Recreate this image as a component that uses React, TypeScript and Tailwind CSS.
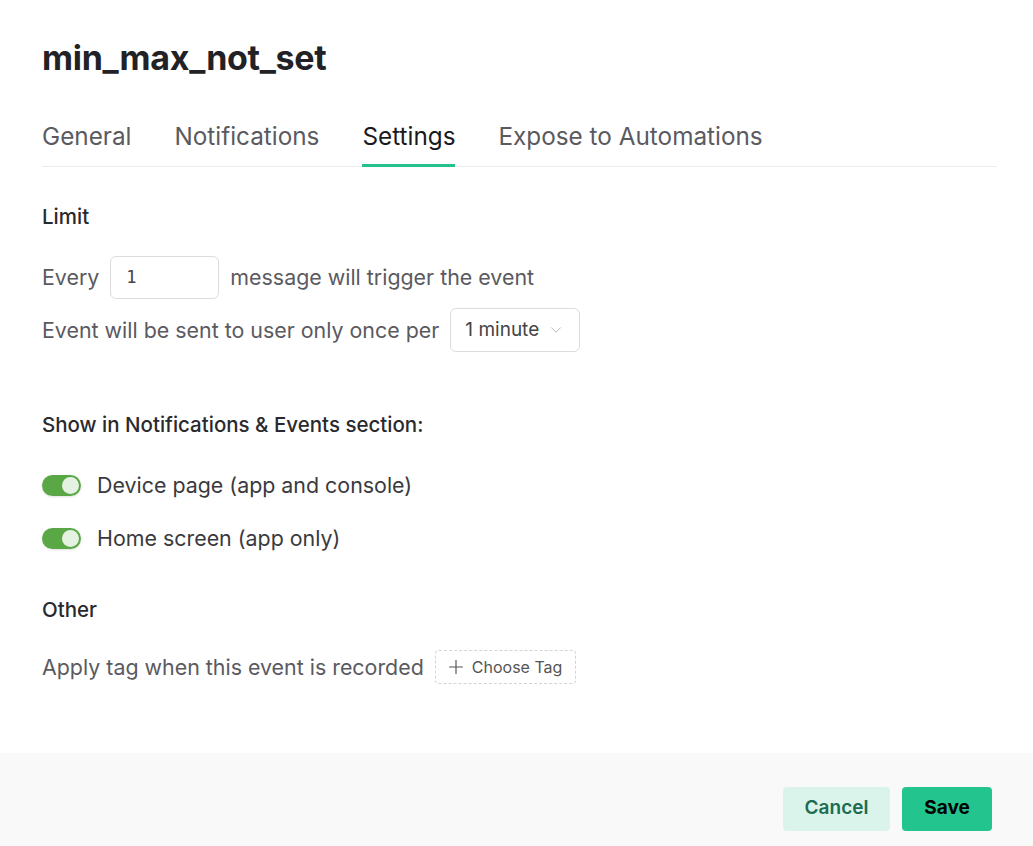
import { Plus, ChevronDown } from "lucide-react";

function Toggle() {
  return (
    <div className="w-[39px] h-[21px] rounded-full bg-[#5aa845] flex items-center justify-end px-[2px] shadow-sm">
      <div className="w-[17px] h-[17px] rounded-full bg-[#e6f2e1]" />
    </div>
  );
}

export default function App() {
  const tabs = ["General", "Notifications", "Settings", "Expose to Automations"];

  return (
    <div className="w-[1033px] h-[846px] bg-white flex flex-col font-['Inter','Liberation_Sans',sans-serif] text-[#5a5a5f]">
      <div className="flex-1 px-[42px] pt-[38px] pr-[36px]">
        <h1 className="text-[34px] font-bold text-[#222226] leading-[40px] tracking-[-0.3px]">
          min_max_not_set
        </h1>
        <div className="mt-[42px] flex gap-[43px] border-b border-[#ececec]">
          {tabs.map((t) => (
            <div
              key={t}
              className={
                t === "Settings"
                  ? "text-[24.3px] leading-[32px] pb-[12px] text-[#1a1a1e] border-b-[3px] border-[#26c08c] -mb-px"
                  : "text-[24.3px] leading-[32px] pb-[12px] text-[#5a5a5f] border-b-[3px] border-transparent -mb-px"
              }
            >
              {t}
            </div>
          ))}
        </div>

        <div className="mt-[37px] text-[20.5px] font-medium text-[#2a2a2e] leading-[26px]">Limit</div>

        <div className="mt-[26px] flex items-center gap-[11px] text-[21.4px]">
          <span>Every</span>
          <div className="w-[109px] h-[43px] border border-[#dcdcdc] rounded-[6px] flex items-center pl-[15px] font-['DejaVu_Sans_Mono',monospace] text-[17px] text-[#444]">
            1
          </div>
          <span>message will trigger the event</span>
        </div>

        <div className="mt-[9px] flex items-center gap-[11px] text-[21.4px]">
          <span>Event will be sent to user only once per</span>
          <div className="w-[130px] h-[44px] border border-[#dcdcdc] rounded-[6px] flex items-center pl-[14px] gap-[8px] text-[19px] text-[#444]">
            <span>1 minute</span>
            <ChevronDown size={18} strokeWidth={1.1} className="text-[#aaa]" />
          </div>
        </div>

        <div className="mt-[60px] text-[20.5px] font-medium text-[#2a2a2e] leading-[26px]">
          Show in Notifications &amp; Events section:
        </div>

        <div className="mt-[31px] flex items-center gap-[16px] text-[21.4px] text-[#3a3a3e]">
          <Toggle />
          <span>Device page (app and console)</span>
        </div>
        <div className="mt-[21px] flex items-center gap-[16px] text-[21.4px] text-[#3a3a3e]">
          <Toggle />
          <span>Home screen (app only)</span>
        </div>

        <div className="mt-[43px] text-[20.5px] font-medium text-[#2a2a2e] leading-[26px]">Other</div>

        <div className="mt-[27px] flex items-center gap-[11px] text-[21.4px]">
          <span>Apply tag when this event is recorded</span>
          <div className="h-[34px] w-[141px] border border-dashed border-[#d4d4d4] rounded-[4px] flex items-center pl-[9px] gap-[5px] text-[16px] text-[#555]">
            <Plus size={22} strokeWidth={1.3} className="text-[#555]" />
            <span>Choose Tag</span>
          </div>
        </div>
      </div>

      <div className="h-[93px] bg-[#f9f9f9] flex items-center justify-end gap-[12px] pr-[41px] pt-[18px]">
        <button className="h-[44px] w-[107px] rounded-[4px] bg-[#dbf4eb] text-[#1c6b52] text-[19px] font-semibold">
          Cancel
        </button>
        <button className="h-[44px] w-[90px] rounded-[4px] bg-[#24c48e] text-black text-[19px] font-bold">
          Save
        </button>
      </div>
    </div>
  );
}
